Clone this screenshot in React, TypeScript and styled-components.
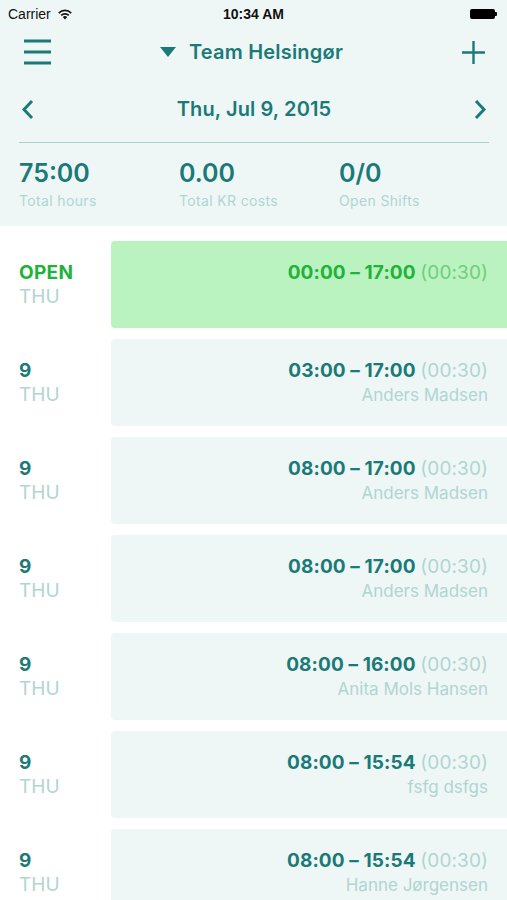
import styled, { createGlobalStyle } from "styled-components";

const GlobalStyle = createGlobalStyle`
  body {
    margin: 0;
    background: #ffffff;
    font-family: Inter, "Open Sans", sans-serif;
  }
`;

const TEAL = "#1b7a78";
const PALE = "#b0d5d2";

type Shift = {
  id: number;
  open?: boolean;
  start: string;
  end: string;
  pause: string;
  name?: string;
};

const shifts: Shift[] = [
  { id: 1, open: true, start: "00:00", end: "17:00", pause: "00:30" },
  { id: 2, start: "03:00", end: "17:00", pause: "00:30", name: "Anders Madsen" },
  { id: 3, start: "08:00", end: "17:00", pause: "00:30", name: "Anders Madsen" },
  { id: 4, start: "08:00", end: "17:00", pause: "00:30", name: "Anders Madsen" },
  { id: 5, start: "08:00", end: "16:00", pause: "00:30", name: "Anita Mols Hansen" },
  { id: 6, start: "08:00", end: "15:54", pause: "00:30", name: "fsfg dsfgs" },
  { id: 7, start: "08:00", end: "15:54", pause: "00:30", name: "Hanne Jørgensen" },
];

const Screen = styled.div`
  width: 507px;
  height: 900px;
  overflow: hidden;
`;

const Top = styled.div`
  background: #eef7f6;
  height: 226px;
`;

const StatusBar = styled.div`
  height: 28px;
  display: grid;
  grid-template-columns: 1fr auto 1fr;
  align-items: center;
  padding: 0 8px;
  font-family: "Liberation Sans", Arial, sans-serif;
  font-size: 14px;
  color: #111;
`;

const Carrier = styled.div`
  display: flex;
  align-items: center;
  gap: 6px;
`;

const Clock = styled.div`
  font-weight: 700;
`;

const Battery = styled.div`
  justify-self: end;
  display: flex;
  align-items: center;
  margin-right: 2px;
`;

const BatteryBody = styled.div`
  width: 25px;
  height: 10px;
  background: #000;
  border-radius: 2px;
`;

const BatteryTip = styled.div`
  width: 2px;
  height: 4px;
  background: #000;
  border-radius: 0 1px 1px 0;
`;

const NavBar = styled.div`
  height: 48px;
  display: flex;
  align-items: center;
  justify-content: space-between;
  padding: 0 22px 0 24px;
`;

const NavTitle = styled.div`
  display: flex;
  align-items: center;
  gap: 13px;
  font-size: 20px;
  font-weight: 600;
  letter-spacing: 0.2px;
  color: ${TEAL};
  margin-right: 10px;
`;

const DateRow = styled.div`
  height: 66px;
  display: flex;
  align-items: center;
  justify-content: space-between;
  padding: 0 20px 0 21px;
`;

const DateText = styled.div`
  font-size: 20px;
  font-weight: 600;
  letter-spacing: 0.1px;
  color: ${TEAL};
`;

const Divider = styled.div`
  margin: 0 18px 0 19px;
  height: 1px;
  background: #a9d2cf;
`;

const Stats = styled.div`
  display: grid;
  grid-template-columns: 160px 160px 1fr;
  padding: 15px 19px 0;
`;

const Stat = styled.div`
  display: flex;
  flex-direction: column;
`;

const StatValue = styled.div`
  font-size: 25px;
  font-weight: 600;
  line-height: 31px;
  color: ${TEAL};
`;

const StatLabel = styled.div`
  font-size: 14px;
  line-height: 24px;
  letter-spacing: 0.35px;
  color: ${PALE};
`;

const List = styled.div`
  display: flex;
  flex-direction: column;
  gap: 11px;
  padding-top: 15px;
`;

const Row = styled.div`
  display: flex;
  height: 87px;
`;

const DayCol = styled.div`
  width: 92px;
  padding: 20px 0 0 19px;
  display: flex;
  flex-direction: column;
`;

const DayTop = styled.div<{ $open?: boolean }>`
  font-size: 19px;
  font-weight: 700;
  line-height: 24px;
  letter-spacing: 0.3px;
  color: ${(p) => (p.$open ? "#21b23a" : TEAL)};
`;

const DayName = styled.div`
  font-size: 19px;
  line-height: 24px;
  color: ${PALE};
`;

const Card = styled.div<{ $open?: boolean }>`
  flex: 1;
  background: ${(p) => (p.$open ? "#bbf3c0" : "#eef7f6")};
  border-radius: 4px 0 0 4px;
  padding: 20px 19px 0 0;
  display: flex;
  flex-direction: column;
  align-items: flex-end;
`;

const Time = styled.div<{ $open?: boolean }>`
  font-size: 19px;
  font-weight: 700;
  line-height: 24px;
  letter-spacing: 0.1px;
  color: ${(p) => (p.$open ? "#21b23a" : TEAL)};
`;

const Pause = styled.span<{ $open?: boolean }>`
  font-weight: 400;
  color: ${(p) => (p.$open ? "#6fce7c" : PALE)};
`;

const Person = styled.div`
  font-size: 17px;
  line-height: 25px;
  color: ${PALE};
`;

const Wifi = () => (
  <svg width="16" height="12" viewBox="0 0 16 12">
    <path d="M8 11.5 L10.2 9 A3.2 3.2 0 0 0 5.8 9 Z" fill="#111" />
    <path d="M3.6 6.8 A6.2 6.2 0 0 1 12.4 6.8 L11.2 8.1 A4.5 4.5 0 0 0 4.8 8.1 Z" fill="#111" />
    <path d="M1.2 4.4 A9.6 9.6 0 0 1 14.8 4.4 L13.6 5.7 A7.8 7.8 0 0 0 2.4 5.7 Z" fill="#111" />
  </svg>
);

const Hamburger = () => (
  <svg width="27" height="26" viewBox="0 0 27 26">
    <path d="M0 2h27M0 13h27M0 24h27" stroke={TEAL} strokeWidth="3" />
  </svg>
);

const Plus = () => (
  <svg width="23" height="23" viewBox="0 0 23 23">
    <path d="M11.5 0v23M0 11.5h23" stroke={TEAL} strokeWidth="2.4" />
  </svg>
);

const Caret = () => (
  <svg width="16" height="10" viewBox="0 0 16 10">
    <path d="M0 0h16L8 10z" fill={TEAL} />
  </svg>
);

const Chevron = ({ dir }: { dir: "left" | "right" }) => (
  <svg width="13" height="21" viewBox="0 0 13 21">
    <path
      d={dir === "left" ? "M11 2L3 10.5L11 19" : "M2 2L10 10.5L2 19"}
      stroke={TEAL}
      strokeWidth="3"
      fill="none"
    />
  </svg>
);

const App = () => (
  <Screen>
    <GlobalStyle />
    <Top>
      <StatusBar>
        <Carrier>
          Carrier <Wifi />
        </Carrier>
        <Clock>10:34 AM</Clock>
        <Battery>
          <BatteryBody />
          <BatteryTip />
        </Battery>
      </StatusBar>
      <NavBar>
        <Hamburger />
        <NavTitle>
          <Caret />
          Team Helsingør
        </NavTitle>
        <Plus />
      </NavBar>
      <DateRow>
        <Chevron dir="left" />
        <DateText>Thu, Jul 9, 2015</DateText>
        <Chevron dir="right" />
      </DateRow>
      <Divider />
      <Stats>
        <Stat>
          <StatValue>75:00</StatValue>
          <StatLabel>Total hours</StatLabel>
        </Stat>
        <Stat>
          <StatValue>0.00</StatValue>
          <StatLabel>Total KR costs</StatLabel>
        </Stat>
        <Stat>
          <StatValue>0/0</StatValue>
          <StatLabel>Open Shifts</StatLabel>
        </Stat>
      </Stats>
    </Top>
    <List>
      {shifts.map((s) => (
        <Row key={s.id}>
          <DayCol>
            <DayTop $open={s.open}>{s.open ? "OPEN" : "9"}</DayTop>
            <DayName>THU</DayName>
          </DayCol>
          <Card $open={s.open}>
            <Time $open={s.open}>
              {s.start} – {s.end} <Pause $open={s.open}>({s.pause})</Pause>
            </Time>
            {s.name && <Person>{s.name}</Person>}
          </Card>
        </Row>
      ))}
    </List>
  </Screen>
);

export default App;
